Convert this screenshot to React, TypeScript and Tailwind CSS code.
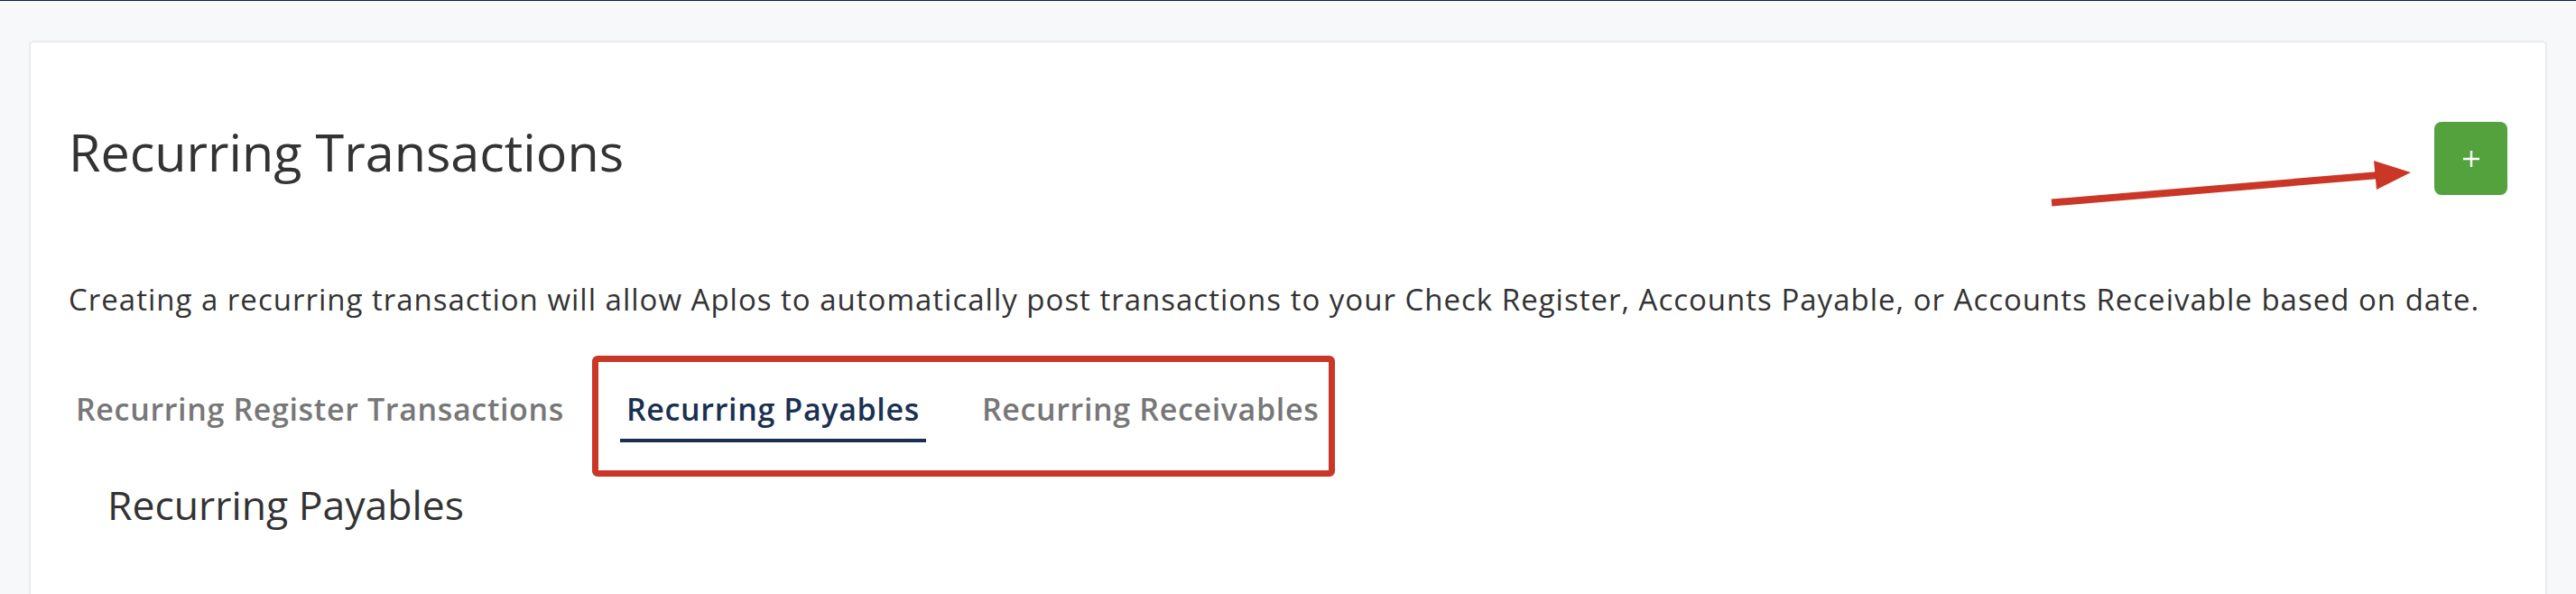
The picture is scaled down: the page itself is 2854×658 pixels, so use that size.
import React from "react";

const font = { fontFamily: '"Open Sans", "Noto Sans", sans-serif' };

export default function App() {
  return (
    <div
      className="relative h-[658px] overflow-hidden bg-[#f7f8fa] border-t border-[#0f2444] px-[32px] pt-[44px]"
      style={font}
    >
      <div className="h-[700px] rounded-[5px] border-2 border-[#e9ebee] bg-white px-[42px] pt-[86px]">
        <div className="flex items-start justify-between">
          <h1 className="text-[57.5px] leading-[70px] font-normal text-[#333333]">
            Recurring Transactions
          </h1>
          <button className="mt-[2px] flex h-[81px] w-[81px] items-center justify-center rounded-[8px] bg-[#53a23d]">
            <svg width="20" height="20" viewBox="0 0 20 20">
              <path d="M10 1v18M1 10h18" stroke="white" strokeWidth="2.4" />
            </svg>
          </button>
        </div>
        <p className="mt-[92px] text-[33px] leading-[48px] tracking-[1px] text-[#333333]">
          Creating a recurring transaction will allow Aplos to automatically post transactions to your Check Register, Accounts Payable, or Accounts Receivable based on date.
        </p>
        <div className="mt-[75px] flex gap-[55px] pl-[1px]">
          <div className="border-b-4 border-transparent px-[7px] pb-[11px] text-[34px] leading-[44px] tracking-[0.65px] font-semibold text-[#777777]">
            Recurring Register Transactions
          </div>
          <div className="border-b-4 border-[#1a3052] px-[7px] pb-[11px] text-[34px] leading-[44px] tracking-[0.65px] font-semibold text-[#1a3052]">
            Recurring Payables
          </div>
          <div className="border-b-4 border-transparent px-[7px] pb-[11px] text-[34px] leading-[44px] tracking-[0.65px] font-semibold text-[#777777]">
            Recurring Receivables
          </div>
        </div>
        <h2 className="mt-[41px] pl-[43px] text-[44.5px] leading-[56px] font-normal text-[#333333]">
          Recurring Payables
        </h2>
      </div>

      <div className="pointer-events-none absolute left-[656px] top-[393px] h-[134px] w-[823px] rounded-[6px] border-[7px] border-[#ca3727]" />

      <svg
        className="pointer-events-none absolute left-0 top-0"
        width="2854"
        height="658"
        viewBox="0 0 2854 658"
      >
        <line x1="2273" y1="223.5" x2="2636" y2="193" stroke="#ca3727" strokeWidth="8" />
        <polygon points="2630,177 2671,190 2633,209" fill="#ca3727" />
      </svg>
    </div>
  );
}
